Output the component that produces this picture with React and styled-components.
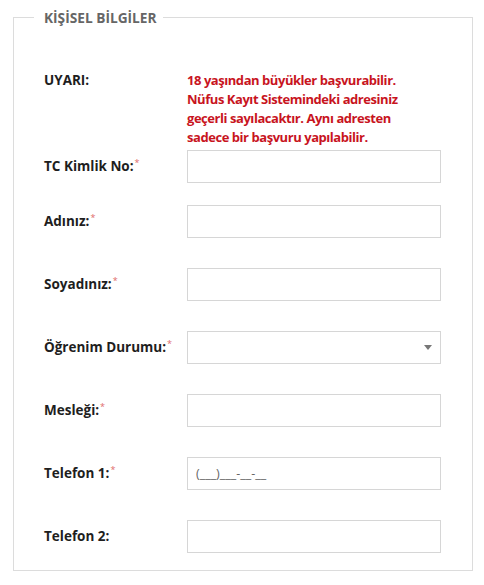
import React from "react";
import styled, { createGlobalStyle } from "styled-components";

const GlobalStyle = createGlobalStyle`
  body {
    margin: 0;
    background: #fff;
    font-family: "Open Sans", "Noto Sans", sans-serif;
  }
`;

const rows = [
  { label: "TC Kimlik No:", required: true, gap: 3 },
  { label: "Adınız:", required: true, gap: 22 },
  { label: "Soyadınız:", required: true, gap: 30 },
  { label: "Öğrenim Durumu:", required: true, gap: 30, select: true },
  { label: "Mesleği:", required: true, gap: 30 },
  { label: "Telefon 1:", required: true, gap: 30, placeholder: "(___)___-__-__" },
  { label: "Telefon 2:", required: false, gap: 30 },
];

export default function App() {
  return (
    <>
      <GlobalStyle />
      <Page>
        <Fieldset>
          <Legend>KİŞİSEL BİLGİLER</Legend>
          <WarningRow>
            <Label>UYARI:</Label>
            <Warning>
              18 yaşından büyükler başvurabilir.
              <br />
              Nüfus Kayıt Sistemindeki adresiniz
              <br />
              geçerli sayılacaktır. Aynı adresten
              <br />
              sadece bir başvuru yapılabilir.
            </Warning>
          </WarningRow>
          {rows.map((row) => (
            <Row key={row.label} $gap={row.gap}>
              <Label>
                {row.label}
                {row.required && <Star>*</Star>}
              </Label>
              {row.select ? (
                <SelectBox>
                  <Caret />
                </SelectBox>
              ) : (
                <Input placeholder={row.placeholder} />
              )}
            </Row>
          ))}
        </Fieldset>
      </Page>
    </>
  );
}

const Page = styled.div`
  padding: 8px 11px 14px 13px;
`;

const Fieldset = styled.fieldset`
  margin: 0;
  border: 1px solid #dcdcdc;
  padding: 44px 0 17px 30px;
  min-width: 0;
`;

const Legend = styled.legend`
  margin-left: -10px;
  padding: 0 6px 0 10px;
  font-size: 13.7px;
  font-weight: 700;
  color: #666;
`;

const WarningRow = styled.div`
  display: grid;
  grid-template-columns: 143px 1fr;
  align-items: start;
`;

const Row = styled.div`
  display: grid;
  grid-template-columns: 143px 254px;
  align-items: center;
  margin-top: ${(p) => p.$gap}px;
`;

const Label = styled.div`
  font-size: 13.5px;
  font-weight: 700;
  color: #1e1e1e;
  line-height: 19px;
  white-space: nowrap;
`;

const Star = styled.sup`
  color: #e06a6a;
  font-size: 9px;
  font-weight: 400;
  margin-left: 1px;
  vertical-align: 5px;
  line-height: 0;
`;

const Warning = styled.div`
  font-size: 13px;
  font-weight: 700;
  color: #c8141e;
  line-height: 19px;
  letter-spacing: -0.45px;
  white-space: nowrap;
`;

const Input = styled.input`
  box-sizing: border-box;
  width: 254px;
  height: 33px;
  border: 1px solid #d6d6d6;
  background: #fff;
  padding: 0 8px;
  font-family: "Open Sans", sans-serif;
  font-size: 12.5px;
  outline: none;
  &::placeholder {
    color: #666;
  }
`;

const SelectBox = styled.div`
  box-sizing: border-box;
  width: 254px;
  height: 33px;
  border: 1px solid #d6d6d6;
  background: #fff;
  display: flex;
  align-items: center;
  justify-content: flex-end;
  padding-right: 8px;
`;

const Caret = styled.span`
  width: 0;
  height: 0;
  border-left: 4.5px solid transparent;
  border-right: 4.5px solid transparent;
  border-top: 5px solid #777;
`;
